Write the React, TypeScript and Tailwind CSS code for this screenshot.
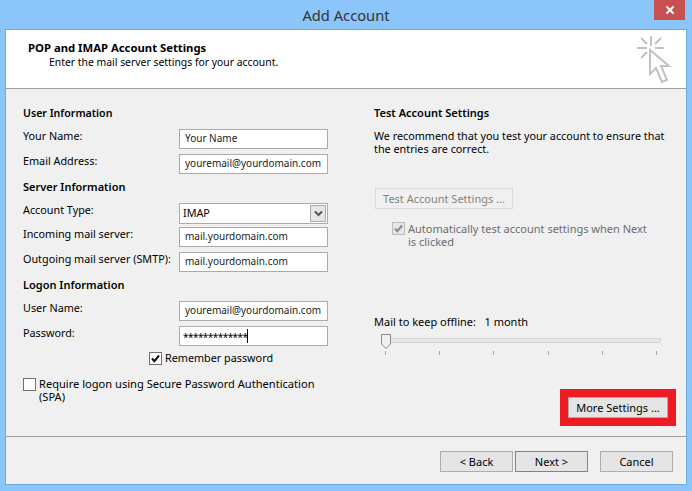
const font = { fontFamily: '"Noto Sans", "Open Sans", sans-serif' };

const Field = ({ label, value, mt }: { label: string; value: string; mt: string }) => (
  <div className={`flex justify-between items-start w-[305px] ${mt}`}>
    <label className="leading-[14px] -mt-[1px]">{label}</label>
    <div className="w-[149px] h-[20px] bg-white border border-[#ababab] px-[5px] text-[10px] leading-[17px] text-[#222] -mt-[1px]">
      {value}
    </div>
  </div>
);

const Check = ({ muted }: { muted?: boolean }) => (
  <span
    className={`flex items-center justify-center shrink-0 w-[13px] h-[13px] border ${
      muted ? "border-[#bcbcbc] bg-[#e6e6e6]" : "border-[#707070] bg-white"
    }`}
  >
    <svg width="11" height="11" viewBox="0 0 11 11">
      <path d="M2 5.5 L4.4 8.2 L9 2.5" fill="none" stroke={muted ? "#8a8a8a" : "#111"} strokeWidth="2" />
    </svg>
  </span>
);

const Btn = ({ label, className }: { label: string; className: string }) => (
  <button className={`h-[21px] bg-[#e5e5e5] border text-[11px] text-center leading-[18px] ${className}`}>{label}</button>
);

const Wizard = () => (
  <svg width="36" height="50" viewBox="0 0 36 50" fill="none" stroke="#c2c2c2" strokeWidth="2">
    <path d="M15 1 V11 M1 13 H11 M19 13 H28 M5 3 L11 9 M25 3 L19 9 M5 23 L11 17" />
    <path d="M14 15 V39 L20 33 L26 47 L31 45 L25 31 L33 31 Z" />
  </svg>
);

export default function App() {
  return (
    <div
      className="w-[692px] h-[491px] bg-[#8bc5fa] flex flex-col overflow-hidden relative text-[10.8px] text-black"
      style={font}
    >
      <div className="h-[29px] shrink-0 text-center text-[14.7px] leading-[30px] text-[#333]">Add Account</div>
      <button className="absolute top-0 right-[7px] w-[31px] h-[20px] bg-[#c75050] flex items-center justify-center">
        <svg width="10" height="10" viewBox="0 0 10 10">
          <path d="M1.5 1.5 L8.5 8.5 M8.5 1.5 L1.5 8.5" stroke="#fff" strokeWidth="2" />
        </svg>
      </button>

      <div className="mx-[5px] mb-[6px] flex-1 flex flex-col border border-[#6faadf] bg-[#f0f0f0]">
        <div className="h-[59px] shrink-0 bg-white border-b border-[#a0a0a0] flex justify-between pl-[22px] pr-[14px]">
          <div>
            <h1 className="font-bold text-[11.3px] leading-[15px] mt-[10px]">POP and IMAP Account Settings</h1>
            <p className="text-[10.4px] leading-[15px] ml-[21px]">Enter the mail server settings for your account.</p>
          </div>
          <div className="mt-[5px]">
            <Wizard />
          </div>
        </div>

        <div className="flex-1 flex pl-[17px]">
          <div className="w-[351px] shrink-0">
            <h2 className="font-semibold text-[10.6px] leading-[14px] mt-[17px]">User Information</h2>
            <Field label="Your Name:" value="Your Name" mt="mt-[10px]" />
            <Field label="Email Address:" value="youremail@yourdomain.com" mt="mt-[6px]" />
            <h2 className="font-semibold text-[11px] leading-[14px] mt-[6px]">Server Information</h2>
            <div className="flex justify-between items-start w-[305px] mt-[10px]">
              <label className="leading-[14px] -mt-[1px]">Account Type:</label>
              <div className="w-[149px] h-[21px] bg-white border border-[#ababab] pl-[3px] pr-[1px] flex items-center justify-between -mt-[1px]">
                <span>IMAP</span>
                <span className="w-[16px] h-[17px] bg-[#e5e5e5] border border-[#ababab] flex items-center justify-center">
                  <svg width="9" height="7" viewBox="0 0 9 7">
                    <path d="M1 1.5 L4.5 5 L8 1.5" fill="none" stroke="#555" strokeWidth="2" />
                  </svg>
                </span>
              </div>
            </div>
            <Field label="Incoming mail server:" value="mail.yourdomain.com" mt="mt-[4px]" />
            <Field label="Outgoing mail server (SMTP):" value="mail.yourdomain.com" mt="mt-[6px]" />
            <h2 className="font-semibold text-[11px] leading-[14px] mt-[6px]">Logon Information</h2>
            <Field label="User Name:" value="youremail@yourdomain.com" mt="mt-[10px]" />
            <div className="flex justify-between items-start w-[305px] mt-[6px]">
              <label className="leading-[14px] -mt-[1px]">Password:</label>
              <div className="w-[149px] h-[20px] bg-white border border-[#ababab] pl-[3px] -mt-[1px] flex items-center text-[10px]">
                <span className="tracking-[-0.55px] mt-[2px]">*************</span>
                <span className="w-[1px] h-[14px] bg-black" />
              </div>
            </div>
            <div className="flex items-center gap-[3px] ml-[126px] mt-[6px]">
              <Check />
              <span className="leading-[14px] -mt-[1px]">Remember password</span>
            </div>
            <div className="flex items-start gap-[3px] mt-[13px] w-[305px]">
              <span className="w-[13px] h-[13px] shrink-0 bg-white border border-[#707070]" />
              <span className="text-[11.1px] leading-[13px] -mt-[1px]">
                Require logon using Secure Password Authentication (SPA)
              </span>
            </div>
          </div>

          <div className="w-[303px] shrink-0 relative">
            <h2 className="font-semibold text-[11px] leading-[14px] mt-[17px]">Test Account Settings</h2>
            <p className="leading-[13px] mt-[9px] w-[300px]">
              We recommend that you test your account to ensure that the entries are correct.
            </p>
            <button className="block w-[138px] h-[21px] mt-[33px] ml-[1px] border border-[#d9d9d9] text-[11px] text-[#838383] leading-[18px]">
              Test Account Settings ...
            </button>
            <div className="flex items-start gap-[3px] ml-[18px] mt-[13px] w-[262px] text-[11px] text-[#6d6d6d]">
              <Check muted />
              <span className="leading-[13px]">Automatically test account settings when Next is clicked</span>
            </div>
            <p className="text-[11px] leading-[14px] mt-[67px]">Mail to keep offline:&nbsp;&nbsp; 1 month</p>
            <div className="relative w-[280px] ml-[7px] mt-[9px] h-[5px] bg-[#e7e7e7] border border-[#d6d6d6]">
              <svg className="absolute -top-[5px] -left-[1px]" width="10" height="15" viewBox="0 0 10 15">
                <path d="M.5.5 H9.5 V10 L5 14.5 L.5 10 Z" fill="#f0f0f0" stroke="#8a8a8a" />
              </svg>
            </div>
            <div className="flex justify-between w-[272px] ml-[11px] mt-[8px]">
              {[0, 1, 2, 3, 4, 5].map((t) => (
                <span key={t} className="w-[1px] h-[4px] bg-[#a8a8a8]" />
              ))}
            </div>
            <div className="absolute right-[1px] bottom-[10px] border-[8px] border-[#ed1c24]">
              <Btn label="More Settings ..." className="block w-[100px] border-[#adadad]" />
            </div>
          </div>
        </div>

        <div className="h-[48px] shrink-0 border-t border-[#a0a0a0] flex items-start pt-[14px] pl-[434px]">
          <Btn label="< Back" className="w-[73px] border-[#adadad]" />
          <Btn label="Next >" className="w-[73px] ml-[2px] border-[#4a90d9]" />
          <Btn label="Cancel" className="w-[73px] ml-[12px] border-[#adadad]" />
        </div>
      </div>
    </div>
  );
}
